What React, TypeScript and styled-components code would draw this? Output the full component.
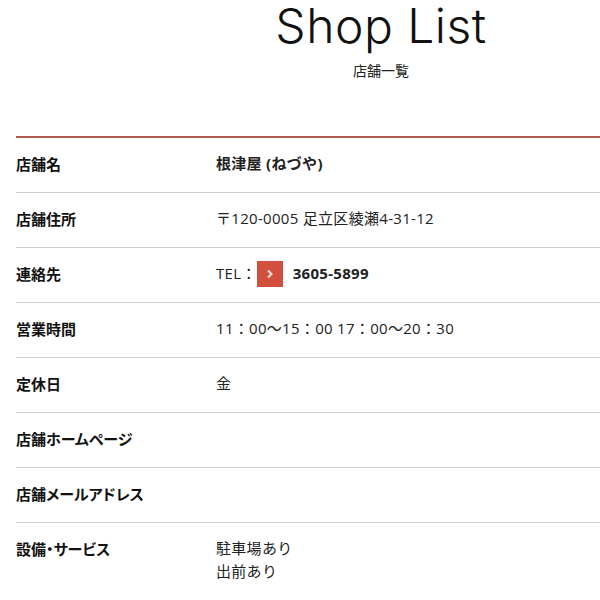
import React from "react";
import styled, { createGlobalStyle } from "styled-components";

const Global = createGlobalStyle`
  html, body { margin: 0; padding: 0; background: #fff; overflow: hidden; }
  body { font-family: "Open Sans", "Noto Sans CJK JP", sans-serif; color: #111; }
`;

const Page = styled.div`
  width: 730px;
  margin-left: 16px;
`;

const Header = styled.header`
  display: flex;
  flex-direction: column;
  align-items: center;
  height: 136px;
`;

const Title = styled.h1`
  margin: 0;
  font-family: "Inter", "Noto Sans", sans-serif;
  font-weight: 300;
  font-size: 48px;
  line-height: 52px;
  letter-spacing: 0.5px;
  color: #111;
`;

const Subtitle = styled.p`
  margin: 8px 0 0;
  font-family: "Noto Sans CJK JP", sans-serif;
  font-size: 14px;
  line-height: 20px;
  color: #222;
`;

const Table = styled.div`
  border-top: 2px solid #b35a4e;
`;

const Row = styled.div`
  display: grid;
  grid-template-columns: 200px 1fr;
  border-bottom: 1px solid #cfcfcf;
  padding: 14px 0 17px;
  font-size: 15px;
  line-height: 23px;
`;

const Label = styled.div`
  font-family: "Noto Sans CJK JP", sans-serif;
  font-weight: 700;
  font-feature-settings: "palt";
  color: #111;
`;

const Value = styled.div<{ $bold?: boolean }>`
  font-family: "Open Sans", "Noto Sans CJK JP", sans-serif;
  font-weight: ${(p) => (p.$bold ? 700 : 400)};
  letter-spacing: 0.3px;
  color: #222;
  display: flex;
  flex-direction: column;
`;

const Tel = styled.div`
  display: flex;
  align-items: center;
  height: 23px;
`;

const TelButton = styled.span`
  display: inline-flex;
  align-items: center;
  justify-content: center;
  width: 26px;
  height: 26px;
  margin: 0 10px 0 0;
  background: #d24e3d;
`;

const TelNumber = styled.span`
  font-weight: 700;
`;

const rows: { label: string; value: React.ReactNode; bold?: boolean }[] = [
  { label: "店舗名", value: "根津屋 (ねづや)", bold: true },
  { label: "店舗住所", value: "〒120-0005 足立区綾瀬4-31-12" },
  {
    label: "連絡先",
    value: (
      <Tel>
        TEL：
        <TelButton>
          <svg width="8" height="10" viewBox="0 0 8 10">
            <path d="M2 1.5 L5.5 5 L2 8.5" stroke="#fbe3de" strokeWidth="2" fill="none" />
          </svg>
        </TelButton>
        <TelNumber>3605-5899</TelNumber>
      </Tel>
    ),
  },
  { label: "営業時間", value: "11：00〜15：00 17：00〜20：30" },
  { label: "定休日", value: "金" },
  { label: "店舗ホームページ", value: "" },
  { label: "店舗メールアドレス", value: "" },
  {
    label: "設備・サービス",
    value: (
      <>
        <span>駐車場あり</span>
        <span>出前あり</span>
      </>
    ),
  },
];

export default function App() {
  return (
    <>
      <Global />
      <Page>
        <Header>
          <Title>Shop List</Title>
          <Subtitle>店舗一覧</Subtitle>
        </Header>
        <Table>
          {rows.map((r) => (
            <Row key={r.label}>
              <Label>{r.label}</Label>
              <Value $bold={r.bold}>{r.value}</Value>
            </Row>
          ))}
        </Table>
      </Page>
    </>
  );
}
